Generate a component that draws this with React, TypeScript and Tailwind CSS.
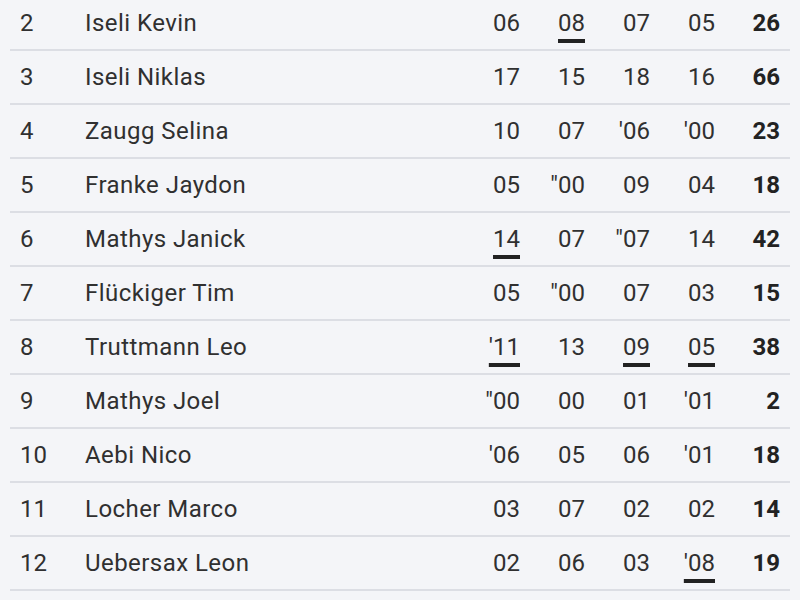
type Cell = { v: string; u?: boolean };

const rows: { rank: number; name: string; cells: Cell[]; total: number }[] = [
  { rank: 2, name: "Iseli Kevin", cells: [{ v: "06" }, { v: "08", u: true }, { v: "07" }, { v: "05" }], total: 26 },
  { rank: 3, name: "Iseli Niklas", cells: [{ v: "17" }, { v: "15" }, { v: "18" }, { v: "16" }], total: 66 },
  { rank: 4, name: "Zaugg Selina", cells: [{ v: "10" }, { v: "07" }, { v: "'06" }, { v: "'00" }], total: 23 },
  { rank: 5, name: "Franke Jaydon", cells: [{ v: "05" }, { v: '"00' }, { v: "09" }, { v: "04" }], total: 18 },
  { rank: 6, name: "Mathys Janick", cells: [{ v: "14", u: true }, { v: "07" }, { v: '"07' }, { v: "14" }], total: 42 },
  { rank: 7, name: "Flückiger Tim", cells: [{ v: "05" }, { v: '"00' }, { v: "07" }, { v: "03" }], total: 15 },
  { rank: 8, name: "Truttmann Leo", cells: [{ v: "'11", u: true }, { v: "13" }, { v: "09", u: true }, { v: "05", u: true }], total: 38 },
  { rank: 9, name: "Mathys Joel", cells: [{ v: '"00' }, { v: "00" }, { v: "01" }, { v: "'01" }], total: 2 },
  { rank: 10, name: "Aebi Nico", cells: [{ v: "'06" }, { v: "05" }, { v: "06" }, { v: "'01" }], total: 18 },
  { rank: 11, name: "Locher Marco", cells: [{ v: "03" }, { v: "07" }, { v: "02" }, { v: "02" }], total: 14 },
  { rank: 12, name: "Uebersax Leon", cells: [{ v: "02" }, { v: "06" }, { v: "03" }, { v: "'08", u: true }], total: 19 },
];

export default function App() {
  return (
    <div
      className="w-[800px] h-[600px] overflow-hidden bg-[#f4f5f8] px-[10px] text-[24px] text-[#303030]"
      style={{ fontFamily: "Roboto, 'Noto Sans', sans-serif" }}
    >
      <div className="-mt-[3px]">
        {rows.map((r) => (
          <div
            key={r.rank}
            className="grid h-[54px] grid-cols-[65px_1fr_65px_65px_65px_65px_65px] items-center border-b-2 border-[#dcdee4] px-[10px]"
          >
            <span>{r.rank}</span>
            <span className="tracking-[0.45px]">{r.name}</span>
            {r.cells.map((c, i) => (
              <span key={i} className="text-right">
                <span
                  className={
                    c.u
                      ? "underline decoration-[4px] decoration-[#222] underline-offset-[8px] [text-decoration-skip-ink:none]"
                      : ""
                  }
                >
                  {c.v}
                </span>
              </span>
            ))}
            <span className="text-right font-bold text-[#222]">{r.total}</span>
          </div>
        ))}
      </div>
    </div>
  );
}
